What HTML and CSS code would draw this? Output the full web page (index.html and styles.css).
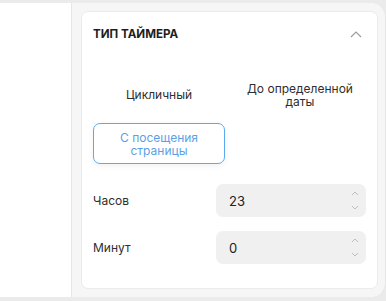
FILE: index.html
```html
<!DOCTYPE html>
<html lang="ru">
<head>
<meta charset="utf-8">
<link rel="stylesheet" href="styles.css">
</head>
<body>
<div class="app">
  <div class="left"></div>
  <div class="sidebar">
    <div class="card">
      <div class="head">
        <span class="title">ТИП ТАЙМЕРА</span>
        <svg class="chev" width="12" height="7" viewBox="0 0 12 7"><path d="M1 6 L6 1 L11 6" fill="none" stroke="#9a9a9a" stroke-width="1.1"/></svg>
      </div>
      <div class="types">
        <div class="type">Цикличный</div>
        <div class="type">До определенной даты</div>
        <div class="type active">С посещения страницы</div>
      </div>
      <div class="field">
        <span class="label">Часов</span>
        <div class="input"><span>23</span>
          <div class="spin">
            <svg width="8" height="5" viewBox="0 0 8 5"><path d="M1 4 L4 1 L7 4" fill="none" stroke="#bdbdbd" stroke-width="1"/></svg>
            <svg width="8" height="5" viewBox="0 0 8 5"><path d="M1 1 L4 4 L7 1" fill="none" stroke="#bdbdbd" stroke-width="1"/></svg>
          </div>
        </div>
      </div>
      <div class="field">
        <span class="label">Минут</span>
        <div class="input"><span>0</span>
          <div class="spin">
            <svg width="8" height="5" viewBox="0 0 8 5"><path d="M1 4 L4 1 L7 4" fill="none" stroke="#bdbdbd" stroke-width="1"/></svg>
            <svg width="8" height="5" viewBox="0 0 8 5"><path d="M1 1 L4 4 L7 1" fill="none" stroke="#bdbdbd" stroke-width="1"/></svg>
          </div>
        </div>
      </div>
    </div>
  </div>
</div>
</body>
</html>
```
FILE: styles.css
```css
* { box-sizing: border-box; }
html, body { margin: 0; padding: 0; }
body {
  background: #ebebeb;
  font-family: Inter, "Noto Sans", sans-serif;
  color: #333;
  width: 386px;
  height: 301px;
  overflow: hidden;
}
.app {
  display: flex;
  margin-top: 3px;
  height: 294px;
}
.left {
  width: 71px;
  background: #fff;
}
.sidebar {
  flex: 1;
  background: #f6f6f6;
  border-left: 1px solid #e6e6e6;
  border-right: 1px solid #e6e6e6;
  border-radius: 0 14px 14px 0;
  padding: 8px 7px 8px 9px;
}
.card {
  background: #fff;
  border: 1px solid #ebebeb;
  border-radius: 7px;
  height: 278px;
  padding: 0 10px 0 11px;
}
.head {
  display: flex;
  justify-content: space-between;
  align-items: center;
  height: 44px;
}
.title {
  font-size: 11.6px;
  font-weight: 700;
  color: #1e1e1e;
}
.chev { margin-right: 5px; }
.types {
  display: grid;
  grid-template-columns: 132px 132px;
  column-gap: 9px;
  row-gap: 8px;
  margin-top: 18px;
}
.type {
  height: 41px;
  display: flex;
  align-items: center;
  justify-content: center;
  text-align: center;
  font-size: 12px;
  line-height: 13px;
  color: #2e2e2e;
  border: 1px solid transparent;
  border-radius: 7px;
  padding: 0 8px;
}
.type.active {
  border-color: #5aa9f2;
  color: #5c9fe6;
  box-shadow: 0 2px 6px rgba(0,0,0,0.06);
}
.field {
  display: flex;
  align-items: center;
  justify-content: space-between;
  margin-top: 20px;
  width: 273px;
}
.field + .field { margin-top: 14px; }
.label { font-size: 12px; color: #2e2e2e; }
.input {
  width: 150px;
  height: 33px;
  background: #f0f0f0;
  border-radius: 7px;
  display: flex;
  align-items: center;
  justify-content: space-between;
  padding: 0 7px 0 13px;
  font-size: 13px;
  color: #222;
}
.spin {
  display: flex;
  flex-direction: column;
  gap: 9px;
}
.spin svg { display: block; }
```
